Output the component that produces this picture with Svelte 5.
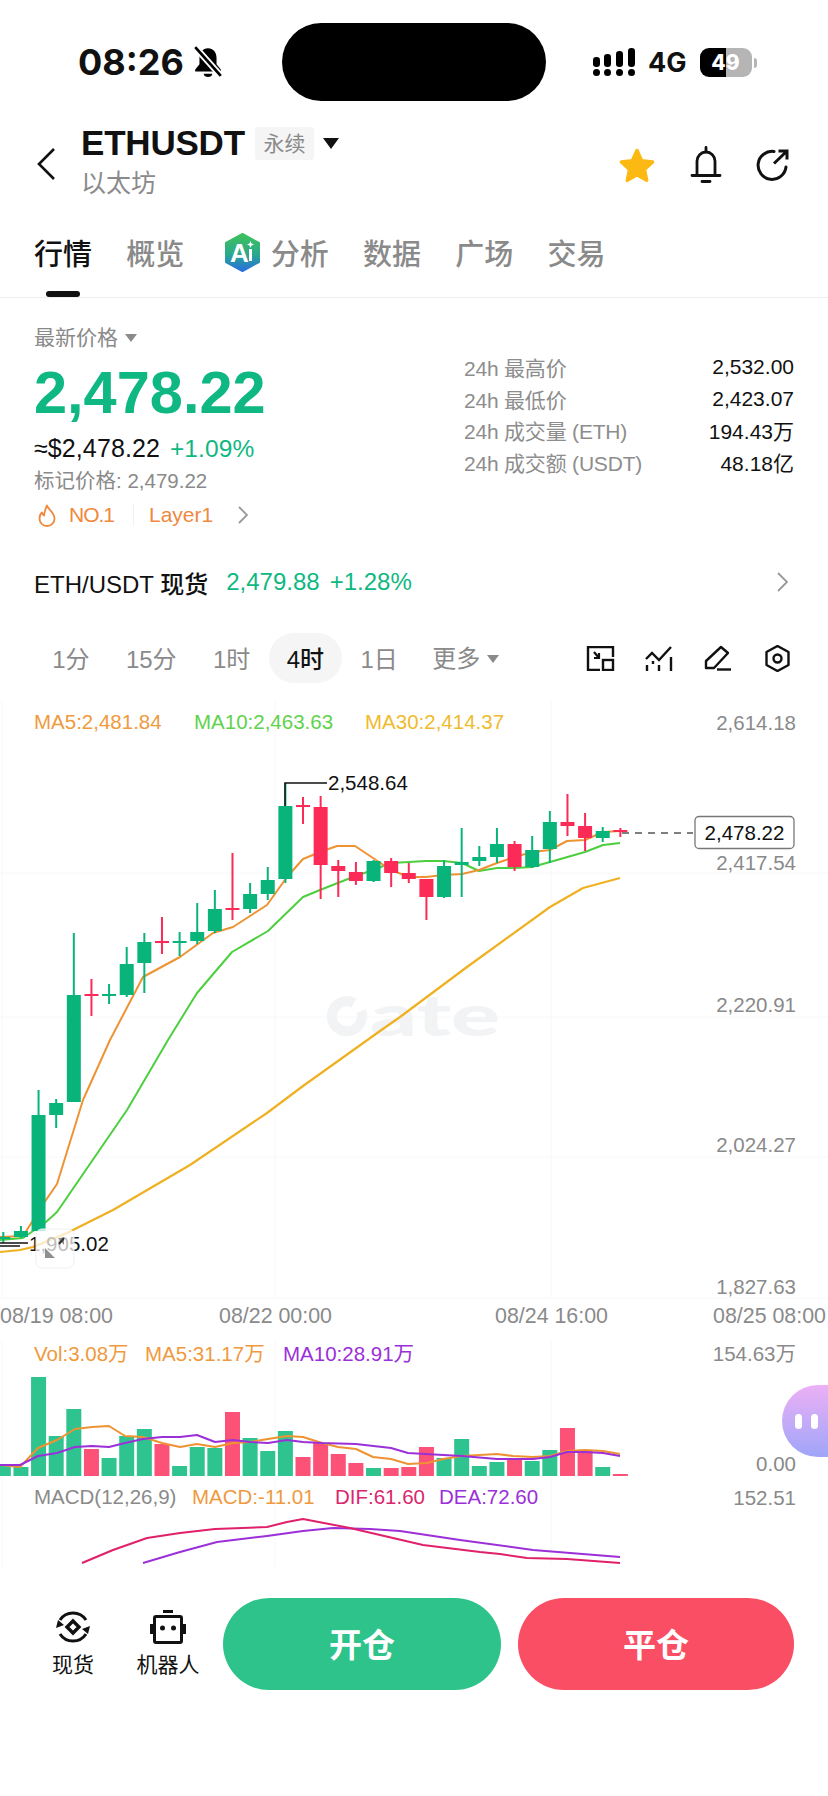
<script>
  const tabs = ['概览', '分析', '数据', '广场', '交易'];
  const stats = [
    ['24h 最高价', '2,532.00'],
    ['24h 最低价', '2,423.07'],
    ['24h 成交量 (ETH)', '194.43万'],
    ['24h 成交额 (USDT)', '48.18亿']
  ];
  const frames = ['1分', '15分', '1时', '4时', '1日'];

  const cx = (i) => 3.3 + 17.63 * i;

  // g/r, wick top, body top, body bottom, wick bottom
  const candles = [
    ['g', 1232, 1237, 1239, 1243], ['g', 1226, 1231, 1237, 1238], ['g', 1090, 1115, 1231, 1231],
    ['g', 1099, 1103, 1115, 1128], ['g', 933, 995, 1102, 1102], ['r', 979, 994, 996, 1016],
    ['g', 984, 994, 996, 1004], ['g', 947, 964, 995, 997], ['g', 933, 942, 963, 993],
    ['r', 917, 941, 943, 954], ['g', 932, 941, 943, 956], ['g', 903, 932, 941, 944],
    ['g', 890, 909, 931, 933], ['r', 853, 908, 910, 920], ['g', 883, 894, 909, 913],
    ['g', 867, 880, 894, 900], ['g', 783, 806, 879, 883], ['r', 797, 805, 807, 824],
    ['r', 796, 807, 865, 899], ['r', 860, 866, 871, 897], ['r', 862, 872, 881, 885],
    ['g', 860, 861, 881, 882], ['r', 858, 861, 873, 887], ['r', 863, 873, 879, 883],
    ['r', 879, 879, 897, 920], ['g', 860, 866, 897, 898], ['g', 828, 862, 865, 897],
    ['g', 846, 857, 861, 866], ['g', 828, 844, 857, 863], ['r', 841, 844, 867, 871],
    ['g', 836, 850, 867, 868], ['g', 811, 822, 849, 863], ['r', 794, 822, 826, 836],
    ['r', 813, 826, 838, 851], ['g', 827, 831, 838, 842], ['r', 828, 830, 832, 837]
  ];

  const ma5 = '0,1237 23,1236 46,1200 57,1184 83,1100 110,1040 143,977 180,957 213,933 233,927 267,905 287,877 303,859 320,852 337,846 355,846 373,858 391,870 409,877 426,877 443,875 462,874 479,870 497,863 515,857 532,852 550,850 567,841 585,840 603,832 620,831';
  const ma10 = '0,1240 23,1238 46,1222 57,1212 127,1110 168,1040 197,993 232,952 268,931 303,897 320,890 353,877 373,870 391,863 409,862 426,861 443,861 462,863 479,871 497,868 515,868 532,867 550,862 585,852 603,845 620,843';
  const ma30 = '0,1252 20,1250 33,1247 67,1233 113,1210 190,1165 267,1113 303,1086 380,1031 400,1017 467,967 550,907 583,888 620,878';

  // g/r, bar top
  const volumes = [
    ['g', 1466], ['g', 1467], ['g', 1377], ['g', 1436], ['g', 1409], ['r', 1449], ['g', 1458], ['g', 1436], ['g', 1429],
    ['r', 1444], ['g', 1466], ['g', 1447], ['g', 1448], ['r', 1412], ['g', 1438], ['g', 1451], ['g', 1431], ['r', 1457],
    ['r', 1443], ['r', 1454], ['r', 1463], ['g', 1468], ['r', 1468], ['r', 1467], ['r', 1447], ['g', 1458], ['g', 1439],
    ['g', 1466], ['g', 1462], ['r', 1460], ['g', 1461], ['g', 1450], ['r', 1428], ['r', 1451], ['g', 1467], ['r', 1474]
  ];
  const volMa5 = '0,1465 20,1467 38,1448 57,1440 75,1429 92,1427 109,1426 125,1436 143,1437 162,1443 180,1447 197,1444 215,1447 233,1443 250,1442 268,1439 287,1436 303,1437 322,1443 338,1447 356,1449 373,1457 391,1459 408,1464 427,1463 443,1459 462,1456 497,1454 513,1456 533,1457 550,1456 567,1451 585,1450 603,1451 620,1454';
  const volMa10 = '0,1465 20,1465 38,1456 57,1453 75,1447 92,1446 109,1447 125,1443 143,1439 162,1437 180,1437 197,1435 215,1442 233,1440 250,1442 268,1443 287,1440 303,1442 322,1443 356,1444 391,1448 408,1453 443,1455 462,1456 497,1459 533,1459 550,1457 567,1452 585,1452 603,1453 620,1456';
  const dif = '82,1563 113,1550 147,1538 180,1533 215,1529 267,1527 287,1522 303,1519 350,1528 423,1545 480,1552 500,1554 527,1558 567,1559 620,1563';
  const dea = '143,1563 180,1552 217,1542 267,1536 303,1531 333,1528 370,1529 400,1531 460,1540 533,1550 620,1557';

  const axis = [['2,614.18', 723], ['2,417.54', 863], ['2,220.91', 1005], ['2,024.27', 1145], ['1,827.63', 1287], ['154.63万', 1354], ['0.00', 1464], ['152.51', 1498]];
  const times = [['08/19 08:00', 0], ['08/22 00:00', 219], ['08/24 16:00', 495], ['08/25 08:00', 713]];
  const legend = [
    ['MA5:2,481.84', 34, 722, '#ef9a3e'], ['MA10:2,463.63', 194, 722, '#5fd24d'], ['MA30:2,414.37', 365, 722, '#f0bb2e'],
    ['Vol:3.08万', 34, 1354, '#ef9a3e'], ['MA5:31.17万', 145, 1354, '#ef9a3e'], ['MA10:28.91万', 283, 1354, '#9b30d9'],
    ['MACD(12,26,9)', 34, 1497, '#8a8a8a'], ['MACD:-11.01', 192, 1497, '#ef9a3e'], ['DIF:61.60', 335, 1497, '#d9276f'], ['DEA:72.60', 439, 1497, '#9b30d9']
  ];
</script>

<div class="screen">
  <div class="status">
    <div class="clock">
      <span>08:26</span>
      <svg width="30" height="32" viewBox="0 0 28 30">
        <path d="M14 2c-5 0-8 4-8 9v6l-4 5v2h24v-2l-4-5v-6c0-5-3-9-8-9z" fill="#000" />
        <path d="M10 26h8c0 2-2 3-4 3s-4-1-4-3z" fill="#000" />
        <path d="M2 1l24 27" stroke="#fff" stroke-width="6" />
        <path d="M2 1l24 27" stroke="#000" stroke-width="2.6" />
      </svg>
    </div>
    <div class="island"></div>
    <div class="status-right">
      <svg width="43" height="29" viewBox="0 0 43 29">
        <g fill="#000">
          <rect x="0" y="9" width="7" height="10" rx="3.2" /><circle cx="3.5" cy="24.5" r="3.5" />
          <rect x="11" y="6" width="7" height="13" rx="3.2" /><circle cx="14.5" cy="24.5" r="3.5" />
          <rect x="23" y="3" width="7" height="16" rx="3.2" /><circle cx="26.5" cy="24.5" r="3.5" />
          <rect x="35" y="0" width="7" height="19" rx="3.2" /><circle cx="38.5" cy="24.5" r="3.5" />
        </g>
      </svg>
      <span class="net">4G</span>
      <div class="battery">
        <span class="level">49</span>
        <i></i>
      </div>
    </div>
  </div>

  <header class="head">
    <svg class="back" width="20" height="34" viewBox="0 0 20 34">
      <path d="M18 2L3 17l15 15" fill="none" stroke="#111" stroke-width="2.6" />
    </svg>
    <div class="title">
      <div class="title-row">
        <span class="pair">ETHUSDT</span>
        <span class="badge">永续</span>
        <span class="caret"></span>
      </div>
      <div class="subname">以太坊</div>
    </div>
    <div class="head-icons">
      <svg width="38" height="36" viewBox="0 0 38 36">
        <path d="M19 3.500l4.600 10.200 11 1.300-8.200 7.400 2.300 10.900-9.700-5.500-9.700 5.500 2.300-10.900-8.200-7.400 11-1.300z" fill="#fdb913" stroke="#fdb913" stroke-width="3.500" stroke-linejoin="round" />
      </svg>
      <svg width="32" height="38" viewBox="0 0 32 38">
        <path d="M7 29V15a9 9 0 0 1 18 0V29" fill="none" stroke="#111" stroke-width="2.800" />
        <path d="M16 1.500v4M2 29.500H30M12 35.500h8" stroke="#111" stroke-width="2.800" stroke-linecap="round" />
      </svg>
      <svg width="34" height="34" viewBox="0 0 34 34">
        <path d="M18 3.500A14 14 0 1 0 30 19" fill="none" stroke="#111" stroke-width="3" stroke-linecap="round" />
        <path d="M18 15.500L30.500 3.500M22.500 3h8.500v8.500" fill="none" stroke="#111" stroke-width="3" />
      </svg>
    </div>
  </header>

  <nav class="tabs">
    <span class="tab active">行情</span>
    {#each tabs as tab}
      {#if tab === '分析'}
        <span class="tab ai">
          <svg width="37" height="39" viewBox="0 0 37 39">
            <defs>
              <linearGradient id="aiFill" x1="0" y1="0" x2="0" y2="1">
                <stop offset="0" stop-color="#3fc25a" />
                <stop offset="0.55" stop-color="#2aa98d" />
                <stop offset="1" stop-color="#2a6fe0" />
              </linearGradient>
            </defs>
            <path d="M18.500 1L35 10v19L18.500 38 2 29V10z" fill="url(#aiFill)" stroke="url(#aiFill)" stroke-width="2" stroke-linejoin="round" />
            <text x="6" y="29" class="ai-mark">A</text>
            <rect x="25" y="16" width="3" height="12" fill="#fff" />
            <path d="M26.500 8l1 2.500 2.500 1-2.500 1-1 2.500-1-2.500-2.500-1 2.500-1z" fill="#fff" />
          </svg>
          {tab}
        </span>
      {:else}
        <span class="tab">{tab}</span>
      {/if}
    {/each}
  </nav>

  <section class="market">
    <div class="quote">
      <div class="quote-label">最新价格<span class="mini-caret"></span></div>
      <div class="price">2,478.22</div>
      <div class="fiat">≈$2,478.22<span class="rise">+1.09%</span></div>
      <div class="mark">标记价格: 2,479.22</div>
      <div class="tags">
        <svg width="20" height="23" viewBox="0 0 20 23">
          <path d="M10 1.500c1 4 7.500 7 7.500 13a7.500 7.500 0 0 1-15 0c0-3 1.200-5 2.500-6 .3 1.500 1 2.500 2 3 .5-3 1.500-7 3-10z" fill="none" stroke="#f0883e" stroke-width="1.800" stroke-linejoin="round" />
        </svg>
        <span class="no">NO.1</span>
        <span class="sep"></span>
        <span class="layer">Layer1</span>
        <svg class="tag-arrow" width="10" height="18" viewBox="0 0 10 18">
          <path d="M1 1l8 8-8 8" fill="none" stroke="#999" stroke-width="1.800" />
        </svg>
      </div>
    </div>
    <dl class="stats">
      {#each stats as [label, value]}
        <div class="stat">
          <dt>{label}</dt>
          <dd>{value}</dd>
        </div>
      {/each}
    </dl>
  </section>

  <div class="spot">
    <span class="spot-name">ETH/USDT 现货</span>
    <span class="spot-price">2,479.88</span>
    <span class="spot-rate">+1.28%</span>
    <svg width="11" height="20" viewBox="0 0 11 20">
      <path d="M1 1l9 9-9 9" fill="none" stroke="#999" stroke-width="1.800" />
    </svg>
  </div>

  <div class="frames">
    {#each frames as frame}
      <span class="frame" class:current={frame === '4时'}>{frame}</span>
    {/each}
    <span class="frame more">更多<span class="mini-caret"></span></span>
    <div class="tools">
      <svg width="29" height="25" viewBox="0 0 29 25">
        <path d="M14 24H2V1h25v10" fill="none" stroke="#111" stroke-width="2.400" />
        <rect x="17" y="14" width="10" height="10" fill="none" stroke="#111" stroke-width="2.400" />
        <path d="M8 6l5 6M8 12h5V7" fill="none" stroke="#111" stroke-width="2.200" />
      </svg>
      <svg width="29" height="25" viewBox="0 0 29 25">
        <path d="M1 13l6-6 7 7L26 1" fill="none" stroke="#111" stroke-width="2.400" />
        <path d="M2 19v6M14 19v6M26 11v14M8 15v3" stroke="#111" stroke-width="2.400" />
      </svg>
      <svg width="29" height="26" viewBox="0 0 29 26">
        <path d="M17 2l7 6L10 23H2v-7z" fill="none" stroke="#111" stroke-width="2.400" stroke-linejoin="round" />
        <path d="M13 24.500h14" stroke="#111" stroke-width="2.400" />
      </svg>
      <svg width="29" height="27" viewBox="0 0 29 27">
        <path d="M14.500 1l11 6v13l-11 6-11-6V7z" fill="none" stroke="#111" stroke-width="2.400" stroke-linejoin="round" />
        <circle cx="14.500" cy="13.500" r="4" fill="none" stroke="#111" stroke-width="2.400" />
      </svg>
    </div>
  </div>

  <div class="chart-wrap">
    <svg class="chart" width="828" height="878" viewBox="0 690 828 878">
      <g stroke="#f8f8f8" stroke-width="1">
        <path d="M2 700V1298M275 700V1298M551 700V1298M0 873H828M0 1017H828M0 1157H828M0 1298H828M2 1340V1566M275 1340V1566M551 1340V1566" />
      </g>

      <path d="M354 1003a15 15 0 1 0 7 8" fill="none" stroke="#f2f3f5" stroke-width="10" />
      <text x="370" y="1036" textLength="130" lengthAdjust="spacingAndGlyphs" class="mark-text">ate</text>

      <polyline points={ma30} fill="none" stroke="#efb122" stroke-width="2.200" stroke-linejoin="round" />
      <polyline points={ma10} fill="none" stroke="#4ccf3e" stroke-width="2" stroke-linejoin="round" />
      <polyline points={ma5} fill="none" stroke="#ee9333" stroke-width="2" stroke-linejoin="round" />

      {#each candles as [kind, wickTop, bodyTop, bodyBottom, wickBottom], i}
        <g fill={kind === 'g' ? '#09b47a' : '#fb2a57'}>
          <rect x={cx(i) - 1} y={wickTop} width="2" height={wickBottom - wickTop} />
          <rect x={cx(i) - 7} y={bodyTop} width="14" height={bodyBottom - bodyTop} />
        </g>
      {/each}

      <path d="M285 806V783H327" fill="none" stroke="#111" stroke-width="1.500" />
      <path d="M0 1243H28M0 1246H20" fill="none" stroke="#111" stroke-width="1.500" />
      <text x="328" y="790" class="chart-text dark">2,548.64</text>
      <text x="29" y="1251" class="chart-text dark">1,905.02</text>

      <rect x="36" y="1229" width="38" height="39" rx="6" fill="#fff" fill-opacity="0.72" stroke="#f0f0f0" />
      <path d="M45 1248v10h10zM58 1238h6v7z" fill="#8f8f8f" />
      <path d="M64 1238l-5 6" stroke="#333" stroke-width="2" />

      <path d="M622 833H693" stroke="#555" stroke-width="1.500" stroke-dasharray="7 6" />
      <rect x="695" y="816.500" width="99" height="32" rx="4" fill="#fff" stroke="#777" stroke-width="1.300" />
      <text x="744.500" y="840" text-anchor="middle" class="chart-text dark">2,478.22</text>

      {#each legend as [label, x, y, color]}
        <text {x} y={y + 7} fill={color} class="chart-text">{label}</text>
      {/each}
      {#each axis as [label, y]}
        <text x="796" y={y + 7} text-anchor="end" class="chart-text muted">{label}</text>
      {/each}
      {#each times as [label, x]}
        <text {x} y="1323" class="chart-text muted time">{label}</text>
      {/each}

      {#each volumes as [kind, top], i}
        <rect x={Math.max(cx(i) - 7.500, 0)} y={top} width={i === 0 ? 10.800 : 15} height={1476 - top} fill={kind === 'g' ? '#2fc48f' : '#fc5277'} />
      {/each}
      <polyline points={volMa5} fill="none" stroke="#ee9333" stroke-width="2" stroke-linejoin="round" />
      <polyline points={volMa10} fill="none" stroke="#9b30d9" stroke-width="2" stroke-linejoin="round" />

      <polyline points={dea} fill="none" stroke="#9b30d9" stroke-width="2" stroke-linejoin="round" />
      <polyline points={dif} fill="none" stroke="#e0206a" stroke-width="2" stroke-linejoin="round" />
    </svg>

    <div class="bubble"><i></i><i></i></div>
  </div>

  <footer class="actions">
    <div class="shortcut first">
      <svg width="38" height="36" viewBox="0 0 38 36">
        <path d="M6 11A15.500 15.500 0 0 1 32 11M32 25A15.500 15.500 0 0 1 6 25" fill="none" stroke="#111" stroke-width="3" />
        <path d="M2 19l2-8 6 5zM36 17l-2 8-6-5z" fill="#111" />
        <path d="M19 12l6 6-6 6-6-6z" fill="none" stroke="#111" stroke-width="3.400" />
      </svg>
      <span>现货</span>
    </div>
    <div class="shortcut">
      <svg width="38" height="36" viewBox="0 0 38 36">
        <rect x="14" y="1" width="10" height="3" fill="#111" />
        <rect x="5.500" y="7.500" width="27" height="26" rx="1.500" fill="none" stroke="#111" stroke-width="3" />
        <rect x="1" y="15" width="3" height="10" fill="#111" />
        <rect x="34" y="15" width="3" height="10" fill="#111" />
        <circle cx="13.500" cy="19" r="2.500" fill="#111" />
        <circle cx="24.500" cy="19" r="2.500" fill="#111" />
      </svg>
      <span>机器人</span>
    </div>
    <button class="trade open">开仓</button>
    <button class="trade close">平仓</button>
  </footer>
</div>

<style>
  :global(body) {
    background: #fff;
  }

  .screen {
    color: #111;
    font-family: "Liberation Sans", "Noto Sans CJK SC", sans-serif;
    height: 1796px;
    overflow: hidden;
    width: 828px;
  }

  .status {
    align-items: center;
    display: flex;
    height: 124px;
  }

  .clock {
    align-items: center;
    display: flex;
    font-family: Inter, sans-serif;
    font-size: 36px;
    font-weight: 700;
    gap: 9px;
    padding-left: 78px;
    width: 204px;
  }

  .island {
    background: #000;
    border-radius: 39px;
    height: 78px;
    width: 264px;
  }

  .status-right {
    align-items: center;
    display: flex;
    margin-left: 47px;
  }

  .net {
    font-family: Inter, sans-serif;
    font-size: 27px;
    font-weight: 700;
    margin-left: 12px;
  }

  .battery {
    background: linear-gradient(90deg, #000 50%, #b5b5b5 50%);
    border-radius: 9px;
    color: #fff;
    font-family: Inter, sans-serif;
    font-size: 21px;
    font-weight: 800;
    height: 29px;
    line-height: 29px;
    margin-left: 13px;
    position: relative;
    text-align: center;
    width: 52px;
  }

  .battery i {
    background: #b5b5b5;
    border-radius: 0 3px 3px 0;
    height: 10px;
    position: absolute;
    right: -5px;
    top: 10px;
    width: 3px;
  }

  .head {
    align-items: flex-start;
    display: flex;
    height: 101px;
    padding-left: 36px;
  }

  .back {
    margin-right: 25px;
    margin-top: 23px;
  }

  .title {
    margin-top: 1px;
  }

  .title-row {
    align-items: center;
    display: flex;
    height: 36px;
  }

  .pair {
    font-size: 35px;
    font-weight: 700;
    letter-spacing: -0.2px;
  }

  .badge {
    background: #f5f5f5;
    border-radius: 3px;
    color: #8a8a8a;
    font-size: 21px;
    line-height: 33px;
    margin-left: 10px;
    text-align: center;
    width: 59px;
  }

  .caret {
    border-left: 8px solid transparent;
    border-right: 8px solid transparent;
    border-top: 11px solid #111;
    margin-left: 9px;
  }

  .subname {
    color: #8a8a8a;
    font-size: 25px;
    line-height: 34px;
    margin-top: 5px;
  }

  .head-icons {
    align-items: center;
    display: flex;
    gap: 34px;
    margin-left: auto;
    margin-top: 22px;
    padding-right: 38px;
  }

  .tabs {
    align-items: center;
    border-bottom: 1px solid #eee;
    display: flex;
    gap: 34.300px;
    height: 72px;
    padding-left: 34px;
  }

  .tab {
    color: #8a8a8a;
    font-size: 29px;
    font-weight: 500;
    margin-top: -18px;
    position: relative;
  }

  .tab.active {
    color: #111;
  }

  .tab.active::after {
    background: #111;
    border-radius: 3px;
    bottom: -24px;
    content: '';
    height: 6px;
    left: 12px;
    position: absolute;
    width: 34px;
  }

  .tab.ai {
    align-items: center;
    display: flex;
    gap: 10px;
    margin-left: 5px;
  }

  .ai-mark {
    fill: #fff;
    font-family: "Liberation Sans", sans-serif;
    font-size: 26px;
    font-weight: 700;
  }

  .market {
    display: flex;
    justify-content: space-between;
    padding: 0 34px;
  }

  .quote-label {
    align-items: center;
    color: #8a8a8a;
    display: flex;
    font-size: 21px;
    line-height: 24px;
    margin-top: 28px;
  }

  .mini-caret {
    border-left: 6px solid transparent;
    border-right: 6px solid transparent;
    border-top: 8px solid #8a8a8a;
    display: inline-block;
    margin-left: 7px;
  }

  .price {
    color: #0fb882;
    font-size: 59.500px;
    font-weight: 700;
    line-height: 66px;
    margin-top: 10px;
  }

  .fiat {
    font-size: 25px;
    letter-spacing: 0.1px;
    line-height: 30px;
    margin-top: 7px;
  }

  .rise {
    color: #0fb882;
    font-size: 24.500px;
    margin-left: 10px;
  }

  .mark {
    color: #8a8a8a;
    font-size: 20.500px;
    line-height: 28px;
    margin-top: 3px;
  }

  .tags {
    align-items: center;
    color: #f0883e;
    display: flex;
    font-size: 21px;
    height: 30px;
    margin-top: 5px;
    padding-left: 3px;
  }

  .no {
    letter-spacing: -1px;
    margin-left: 12px;
  }

  .sep {
    background: #f2f2f2;
    height: 22px;
    margin: 0 15px 0 19px;
    width: 1px;
  }

  .tag-arrow {
    margin-left: 25px;
  }

  .stats {
    margin: 53.500px 0 0;
    width: 330px;
  }

  .stat {
    align-items: center;
    display: flex;
    font-size: 21px;
    height: 31.500px;
    justify-content: space-between;
  }

  .stat dt {
    color: #8d8d8d;
    letter-spacing: -0.2px;
  }

  .stat dd {
    margin: 0;
  }

  .spot {
    align-items: center;
    display: flex;
    font-size: 24px;
    height: 40px;
    margin-top: 32px;
    padding: 0 40px 0 34px;
  }

  .spot-name {
    font-weight: 500;
  }

  .spot-price {
    color: #0fb882;
    margin-left: 18px;
  }

  .spot-rate {
    color: #0fb882;
    margin-left: 10px;
  }

  .spot svg {
    margin-left: auto;
  }

  .frames {
    align-items: center;
    display: flex;
    height: 50px;
    margin-top: 31px;
    padding: 0 36px 0 34px;
  }

  .frame {
    border-radius: 25px;
    box-sizing: border-box;
    color: #8a8a8a;
    font-size: 24px;
    height: 50px;
    line-height: 50px;
    padding: 2px 18.200px 0;
  }

  .frame.current {
    background: #f5f5f5;
    color: #111;
    font-weight: 500;
  }

  .more {
    align-items: center;
    display: flex;
    margin-left: -2px;
  }

  .tools {
    align-items: center;
    display: flex;
    gap: 30px;
    margin-left: auto;
  }

  .chart-wrap {
    height: 878px;
    margin-top: 7px;
    position: relative;
  }

  .chart {
    display: block;
  }

  .chart-text {
    font-family: "Liberation Sans", "Noto Sans CJK SC", sans-serif;
    font-size: 20.500px;
  }

  .chart-text.dark {
    fill: #111;
  }

  .chart-text.muted {
    fill: #8a8a8a;
  }

  .chart-text.time {
    font-size: 21.400px;
  }

  .mark-text {
    fill: #f2f3f5;
    font-family: Lato, sans-serif;
    font-size: 58px;
    font-weight: 900;
  }

  .bubble {
    align-items: center;
    background: linear-gradient(180deg, #ecb0f5, #9fa5f9);
    border-radius: 36px 0 0 36px;
    display: flex;
    gap: 9px;
    height: 72px;
    justify-content: flex-start;
    padding-left: 13px;
    position: absolute;
    right: 0;
    top: 695px;
    width: 33px;
  }

  .bubble i {
    background: #fff;
    border-radius: 4px;
    flex: none;
    height: 15px;
    width: 7px;
  }

  .actions {
    align-items: flex-start;
    display: flex;
    padding-top: 30px;
  }

  .shortcut {
    align-items: center;
    display: flex;
    flex-direction: column;
    font-size: 21px;
    margin-left: 33px;
    margin-top: 11px;
    width: 62px;
  }

  .shortcut.first {
    margin-left: 42px;
    width: 62px;
  }

  .shortcut span {
    line-height: 30px;
    margin-top: 5px;
    white-space: nowrap;
  }

  .trade {
    border: 0;
    border-radius: 46px;
    color: #fff;
    font-family: inherit;
    font-size: 33px;
    font-weight: 700;
    height: 92px;
    padding-bottom: 4px;
  }

  .open {
    background: #2dc38a;
    margin-left: 24px;
    width: 278px;
  }

  .close {
    background: #f94e64;
    margin-left: 17px;
    width: 276px;
  }
</style>
